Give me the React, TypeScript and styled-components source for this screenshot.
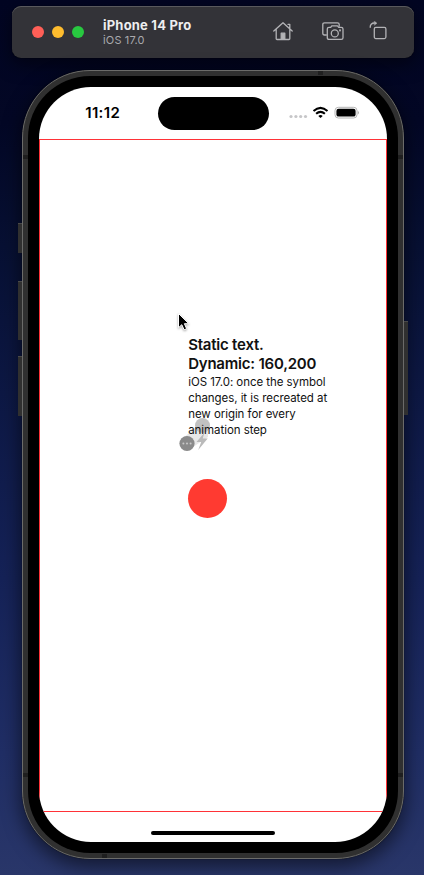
import React from "react";
import styled, { createGlobalStyle } from "styled-components";

const GlobalStyle = createGlobalStyle`
  * { box-sizing: border-box; }
  body { margin: 0; background: #071033; font-family: Inter, "Liberation Sans", sans-serif; }
`;

const Desktop = styled.main`
  position: relative;
  display: flex;
  flex-direction: column;
  width: 424px;
  height: 875px;
  padding: 6px 0 0 12px;
  overflow: hidden;
  background: linear-gradient(180deg, #020522 0%, #030725 14%, #071033 28%, #0d1844 45%, #152257 66%, #202e65 86%, #293669 100%);
`;

const Toolbar = styled.header`
  display: flex;
  align-items: center;
  flex: none;
  width: 402px;
  height: 52px;
  padding: 0 27px 0 20px;
  border-radius: 9px;
  background: #333338;
  box-shadow: inset 0 1px 0 #59595d, 0 0 1px #000, 0 6px 18px rgba(0, 0, 0, 0.5);
`;

const Lights = styled.div`
  display: flex;
  gap: 8px;
`;

const Light = styled.span<{ $color: string }>`
  width: 12px;
  height: 12px;
  border-radius: 50%;
  background: ${(p) => p.$color};
`;

const Title = styled.div`
  flex: 1;
  margin-left: 19px;
`;

const DeviceName = styled.h1`
  margin: 0;
  color: #eeeeef;
  font-size: 13px;
  font-weight: 700;
  line-height: 16px;
  letter-spacing: 0.2px;
`;

const DeviceOs = styled.p`
  margin: 0;
  color: #a9a9ad;
  font-size: 11px;
  line-height: 14px;
  letter-spacing: 0.15px;
`;

const Tools = styled.div`
  display: flex;
  align-items: center;
  height: 24px;
  margin-top: -2px;
`;

const ToolIcon = styled.svg<{ $gap?: number }>`
  margin-left: ${(p) => p.$gap ?? 0}px;
  fill: none;
  stroke: #b3b3b6;
  stroke-width: 1.3;
  stroke-linejoin: round;
  stroke-linecap: round;
`;

const Phone = styled.section`
  position: relative;
  flex: none;
  width: 382px;
  height: 789.5px;
  margin: 11.5px 0 0 10px;
  padding: 5px;
  border: 1px solid #6b6b69;
  border-radius: 68px;
  background: #303030;
  box-shadow: 0 0 1px #000, 0 6px 18px 2px rgba(0, 0, 0, 0.5);
`;

const Bezel = styled.div`
  width: 100%;
  height: 100%;
  padding: 11px 10.8px 11px 11.2px;
  border-radius: 62px;
  background: #000;
`;

const Screen = styled.div`
  display: flex;
  flex-direction: column;
  width: 100%;
  height: 100%;
  overflow: hidden;
  border-radius: 52px;
  background: #fff;
`;

const SideButton = styled.span<{ $side: "left" | "right"; $top: number; $height: number }>`
  position: absolute;
  ${(p) => p.$side}: -5px;
  top: ${(p) => p.$top}px;
  width: 4px;
  height: ${(p) => p.$height}px;
  border-top: 1px solid #494949;
  background: #303030;
`;

const Antenna = styled.span<{ $x: number; $y: number }>`
  position: absolute;
  left: ${(p) => p.$x}px;
  top: ${(p) => p.$y}px;
  width: 5px;
  height: 4px;
  background: #1f1f1f;
`;

const StatusBar = styled.div`
  display: flex;
  flex: none;
  height: 52.5px;
  padding: 10px 28px 0 46px;
`;

const Clock = styled.time`
  width: 73px;
  padding-top: 6px;
  color: #000;
  font-size: 15px;
  font-weight: 600;
  line-height: 20px;
  letter-spacing: 0.35px;
`;

const Island = styled.div`
  width: 111px;
  height: 33px;
  border-radius: 17px;
  background: #000;
`;

const StatusIcons = styled.svg`
  margin: 6.500px 0 0 19px;
`;

const SafeArea = styled.div`
  flex: none;
  height: 673px;
  border: 1px solid #ff3237;
  padding: 194.500px 0 0 148px;
`;

const Message = styled.div`
  position: relative;
  width: 150px;
  color: #111;
`;

const TextLayer = styled.div`
  position: relative;
`;

const Headline = styled.p`
  margin: 0;
  font-size: 15px;
  font-weight: 600;
  line-height: 19.5px;
  letter-spacing: -0.22px;
  white-space: nowrap;
`;

const Note = styled.p`
  margin: 0;
  font-size: 11.5px;
  line-height: 16px;
  letter-spacing: -0.06px;
  white-space: nowrap;
`;

const SymbolTrail = styled.svg`
  position: absolute;
  left: -10px;
  top: 82.5px;
`;

const Dot = styled.div`
  width: 39px;
  height: 39px;
  margin-top: 41px;
  border-radius: 50%;
  background: #ff3a31;
`;

const HomeArea = styled.div`
  display: flex;
  flex: 1;
  align-items: flex-end;
  justify-content: center;
  padding-bottom: 7px;
`;

const HomeIndicator = styled.div`
  width: 124px;
  height: 4.5px;
  border-radius: 3px;
  background: #000;
`;

const Pointer = styled.svg`
  position: absolute;
  left: 177px;
  top: 312px;
  filter: drop-shadow(0 1px 1px rgba(0, 0, 0, 0.35));
`;

const noteLines = [
  "iOS 17.0: once the symbol",
  "changes, it is recreated at",
  "new origin for every",
  "animation step",
];

const antennas = [
  [295, 0],
  [0, 84],
  [375, 84],
  [0, 702],
  [375, 702],
  [79, 783],
];

export default function App() {
  return (
    <Desktop>
      <GlobalStyle />
      <Toolbar>
        <Lights>
          <Light $color="#ff5f57" />
          <Light $color="#febc2e" />
          <Light $color="#28c840" />
        </Lights>
        <Title>
          <DeviceName>iPhone 14 Pro</DeviceName>
          <DeviceOs>iOS 17.0</DeviceOs>
        </Title>
        <Tools>
          <ToolIcon width="20" height="20" viewBox="0 0 20 20">
            <path d="M.8 10.1 10 1.8l9.2 8.3M3.2 8.5v9.2q0 .8.8.8h12q.8 0 .8-.8V8.5M15 3.3h1.8v4.5" />
            <path d="M8.2 18.3v-6.1h3.6v6.1z" fill="#b3b3b6" />
          </ToolIcon>
          <ToolIcon $gap={29} width="22" height="20" viewBox="0 0 22 20">
            <path d="M4.3 14H2.5Q.8 14 .8 12.3V3.5q0-1.7 1.7-1.7h13q1.7 0 1.7 1.7v1.7" />
            <path d="M7 6.4h1.7l1.1-1.5h5.7l1.2 1.5h2.6q1.7 0 1.7 1.7v8.6q0 1.7-1.7 1.7H7q-1.7 0-1.7-1.7V8.1Q5.3 6.4 7 6.4z" />
            <circle cx="12.8" cy="12.4" r="3.5" />
            <circle cx="18" cy="9.4" r=".4" />
          </ToolIcon>
          <ToolIcon $gap={25} width="18" height="20" viewBox="0 0 18 20">
            <rect x="5.3" y="6.4" width="11.6" height="11.2" rx="1.5" />
            <path d="M1.2 6.3C1.2 3.5 2.4 2 5.5 2" />
            <path d="m5.5.3 2.5 1.9-2.5 1.9z" fill="#b3b3b6" strokeWidth=".4" />
          </ToolIcon>
        </Tools>
      </Toolbar>
      <Phone>
        <SideButton $side="left" $top={152} $height={30} />
        <SideButton $side="left" $top={210} $height={59} />
        <SideButton $side="left" $top={285} $height={60} />
        <SideButton $side="right" $top={250} $height={94} />
        {antennas.map(([x, y]) => (
          <Antenna key={`${x}-${y}`} $x={x} $y={y} />
        ))}
        <Bezel>
          <Screen>
            <StatusBar>
              <Clock>11:12</Clock>
              <Island />
              <StatusIcons width="71" height="20" viewBox="0 0 71 20">
                <g fill="#c6c6c8">
                  <circle cx="3" cy="13.5" r="1.6" />
                  <circle cx="7.9" cy="13.5" r="1.6" />
                  <circle cx="12.7" cy="13.5" r="1.6" />
                  <circle cx="17.5" cy="13.5" r="1.6" />
                </g>
                <g fill="none" stroke="#000" strokeWidth="2">
                  <path d="M25.5 8.1Q32.5 1.6 39.5 8.1" />
                  <path d="M28.1 10.8Q32.5 6.9 36.9 10.8" />
                </g>
                <path d="M30.3 12.9Q32.5 11.2 34.7 12.9L32.5 15.1z" />
                <rect x="47" y="4.3" width="22" height="10.7" rx="3.3" fill="none" stroke="#b5b5b5" />
                <rect x="48.4" y="5.700" width="19.200" height="7.900" rx="2.200" />
                <path d="M69.9 8q2.100 1.600 0 3.400z" fill="#aaa" />
              </StatusIcons>
            </StatusBar>
            <SafeArea>
              <Message>
                <SymbolTrail width="34" height="38" viewBox="0 0 34 38">
                  <path d="M18 10 3 23l9 9 18-12V10z" fill="#e7e7e7" />
                  <circle cx="24.5" cy="8.5" r="7.5" fill="#c1c1c1" />
                  <path d="m26.5 15.500-8 9.500h4.700l-3 8 9.500-11.500h-5z" fill="#bababa" />
                  <circle cx="9" cy="26.5" r="7.6" fill="#8a8a8a" />
                  <g fill="#c8c8c8">
                    <circle cx="5.4" cy="26.5" r="1" />
                    <circle cx="9" cy="26.5" r="1" />
                    <circle cx="12.6" cy="26.5" r="1" />
                  </g>
                </SymbolTrail>
                <TextLayer>
                  <Headline>Static text.</Headline>
                  <Headline>Dynamic: 160,200</Headline>
                  {noteLines.map((line) => (
                    <Note key={line}>{line}</Note>
                  ))}
                </TextLayer>
              </Message>
              <Dot />
            </SafeArea>
            <HomeArea>
              <HomeIndicator />
            </HomeArea>
          </Screen>
        </Bezel>
      </Phone>
      <Pointer width="14" height="20" viewBox="0 0 14 20">
        <path d="M1.500 1.500v14.200l3.300-3 2.300 5.100 2.500-1.100-2.200-5h4.400z" fill="#000" stroke="#fff" strokeWidth="1" />
      </Pointer>
    </Desktop>
  );
}
